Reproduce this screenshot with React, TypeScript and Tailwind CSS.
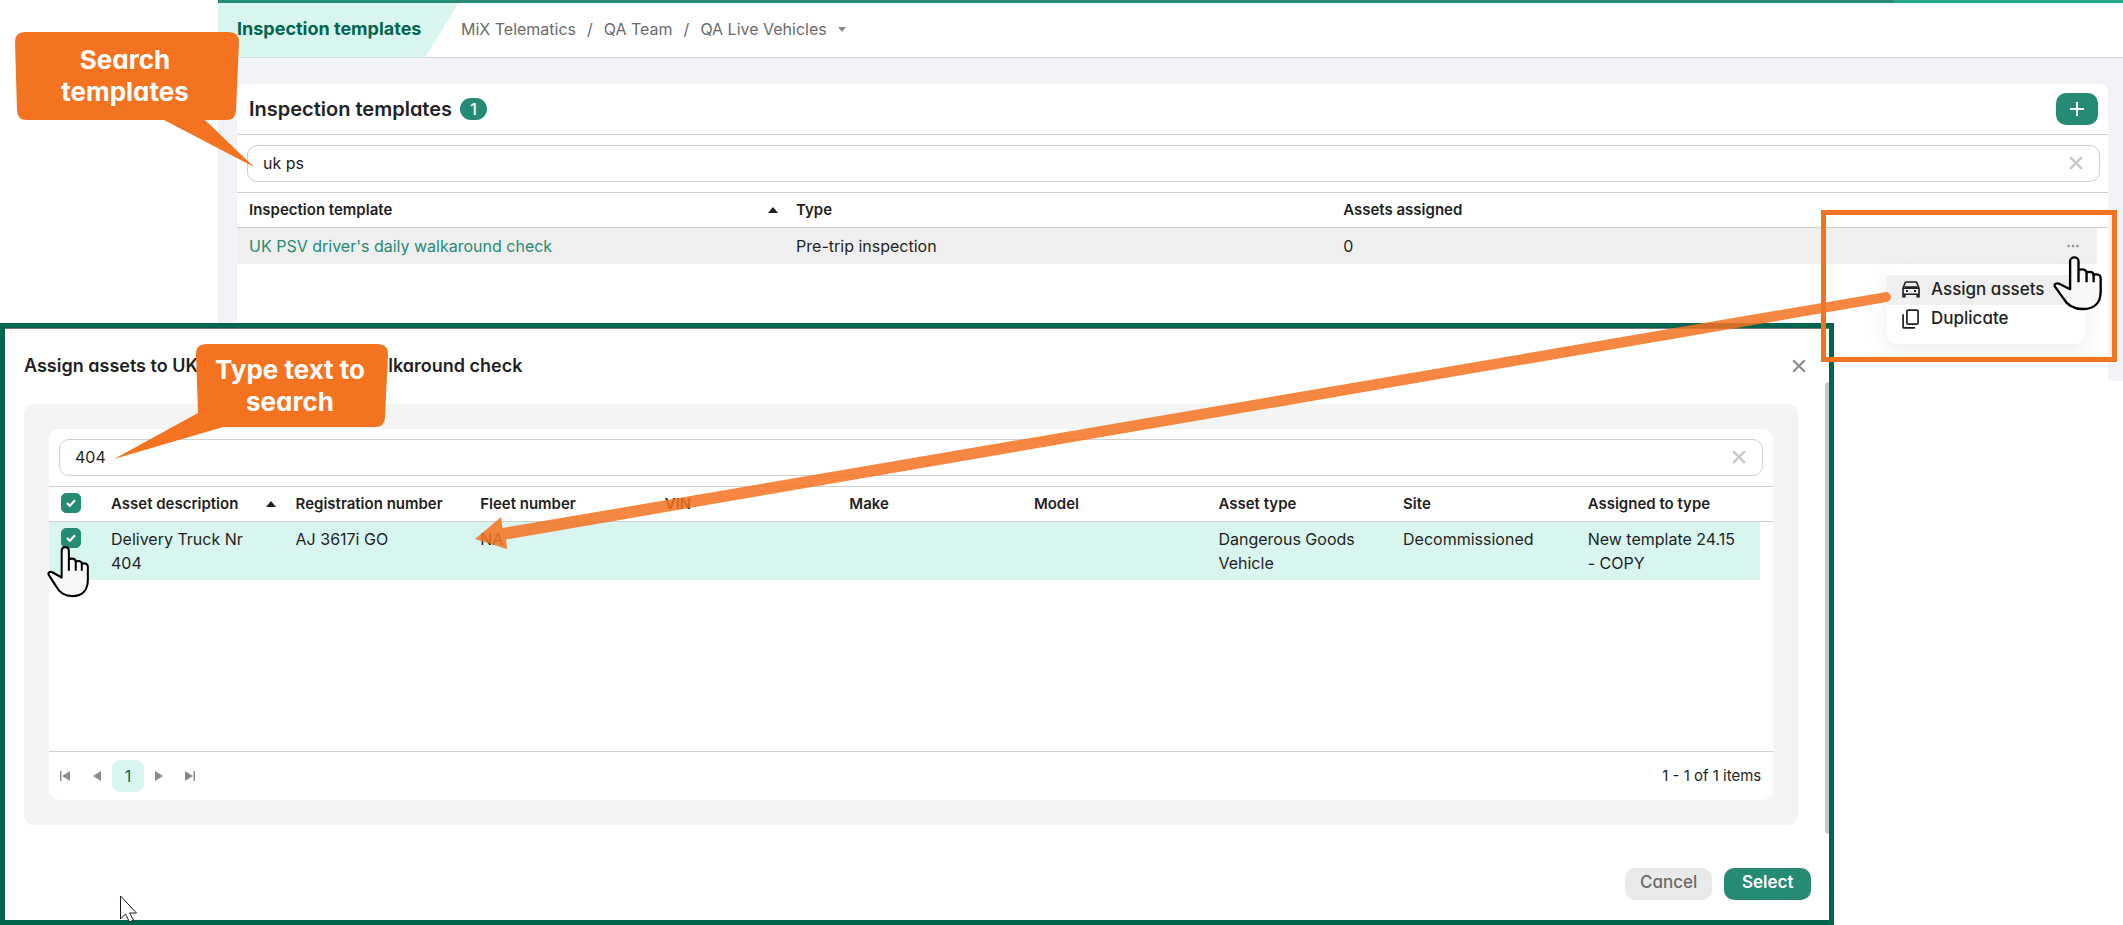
import React, { useState } from "react";

const line = "border-[#cfcfcf]";

function Close({ className }: { className: string }) {
  return (
    <svg viewBox="0 0 12 12" fill="none" stroke="currentColor" className={className} aria-hidden="true">
      <path d="M1 1l10 10M11 1L1 11" />
    </svg>
  );
}

function SortUp() {
  return (
    <svg viewBox="0 0 10 6" className="h-1.5 w-2.5 shrink-0 fill-[#1f1f1f]" aria-hidden="true">
      <path d="M0 6L5 0l5 6z" />
    </svg>
  );
}

function Hand({ className }: { className: string }) {
  return (
    <svg viewBox="490 60 146 168" preserveAspectRatio="none" className={className} aria-hidden="true">
      <path
        d="M541 163V79c0-16 25-16 25 0v26c12-4 24-1 24 8 10-5 21-1 21 6 11-3 21 1 21 9v42c0 36-22 52-54 52-28 0-45-11-57-32l-25-35c-5-9 6-12 14-8z"
        fill="#f8f8f8"
        stroke="#000"
        strokeWidth="7"
        strokeLinejoin="round"
      />
      <path d="M566 104v38M590 112v30M611 118v24" stroke="#000" strokeWidth="7" fill="none" />
    </svg>
  );
}

function SearchBox({ id, label, initial }: { id: string; label: string; initial: string }) {
  const [value, setValue] = useState(initial);
  return (
    <div className={`flex h-[37px] items-center rounded-[10px] border bg-white pr-4 pb-0.5 pl-[15px] ${line}`}>
      <label htmlFor={id} className="sr-only">
        {label}
      </label>
      <input
        id={id}
        type="text"
        value={value}
        onChange={(e) => setValue(e.target.value)}
        className="min-w-0 flex-1 bg-transparent text-base text-[#1f1f1f] outline-none"
      />
      <button type="button" aria-label="Clear search" onClick={() => setValue("")} className="text-[#c9c9c9]">
        <Close className="size-3.5 stroke-[2.2]" />
      </button>
    </div>
  );
}

function Tick({ label }: { label: string }) {
  return (
    <label className="grid size-5 place-items-center">
      <span className="sr-only">{label}</span>
      <input
        type="checkbox"
        defaultChecked
        className="peer col-start-1 row-start-1 size-5 appearance-none rounded-[5px] border border-[#268b74] checked:bg-[#268b74]"
      />
      <svg
        viewBox="0 0 10 8"
        className="pointer-events-none col-start-1 row-start-1 hidden h-2 w-2.5 fill-none stroke-white stroke-[2.2] peer-checked:block"
        aria-hidden="true"
      >
        <path d="M1 4l2.800 2.800L9 1.200" />
      </svg>
    </label>
  );
}

function TemplatesPage() {
  return (
    <div className="ml-[218px]">
      <div className="flex h-[3px] bg-[#25a98a]">
        <div className="w-[88%] bg-[#268b74]" />
      </div>
      <header className={`flex h-[55px] items-center border-b bg-white ${line}`}>
        <h1 className="flex h-[55px] w-[241px] items-center bg-[#d9f5ef] pb-0.5 pl-[19px] text-lg font-bold text-[#02664f] [clip-path:polygon(0_0,100%_0,86%_100%,0_100%)]">
          Inspection templates
        </h1>
        <nav aria-label="Breadcrumb" className="flex items-center gap-[11px] pb-0.5 pl-[2px] text-base text-[#6b6b6b]">
          <a href="#mix">MiX Telematics</a>
          <span>/</span>
          <a href="#team">QA Team</a>
          <span>/</span>
          <a href="#vehicles" className="flex items-center gap-[11px]">
            QA Live Vehicles
            <svg viewBox="0 0 8 5" className="h-[5px] w-2 fill-[#8c8c8c]" aria-hidden="true">
              <path d="M0 0h8L4 5z" />
            </svg>
          </a>
        </nav>
      </header>
      <div className="bg-[#f1f3f7] px-[19px] pt-[26px] pr-[15px]">
        <section className="min-h-[297px] rounded-t-lg bg-white">
          <div className={`flex h-[51px] items-center border-b pr-[10px] pl-3 ${line}`}>
            <h2 className="text-xl font-semibold text-[#1f2328] [font-feature-settings:'cv11']">Inspection templates</h2>
            <span className="ml-2 flex h-[22px] w-[27px] items-center justify-center rounded-full bg-[#268b74] text-base font-medium text-white">
              1
            </span>
            <button
              type="button"
              aria-label="Add template"
              className="ml-auto grid h-8 w-[42px] place-items-center rounded-[10px] bg-[#268b74]"
            >
              <svg viewBox="0 0 14 14" className="size-3.5 stroke-white stroke-2" aria-hidden="true">
                <path d="M7 0v14M0 7h14" />
              </svg>
            </button>
          </div>
          <div className="px-2 py-[10px] pl-[10px]">
            <SearchBox id="template-search" label="Search templates" initial="uk ps" />
          </div>
          <table className="w-full table-fixed border-collapse text-left text-base text-[#1f1f1f]">
            <colgroup>
              <col className="w-[29.24%]" />
              <col className="w-[29.24%]" />
              <col className="w-[29.24%]" />
              <col />
              <col className="w-[11px]" />
            </colgroup>
            <thead>
              <tr className={`h-[35px] border-y text-[15px] ${line}`}>
                <th className="pl-3 font-semibold">
                  <div className="flex items-center justify-between pr-[6px]">
                    Inspection template
                    <SortUp />
                  </div>
                </th>
                <th className="pl-3 font-semibold">Type</th>
                <th className="pl-3 font-semibold">Assets assigned</th>
                <th />
                <th />
              </tr>
            </thead>
            <tbody>
              <tr className="h-9">
                <td className="bg-[#efefef] pl-3">
                  <a href="#template" className="text-[#268b74]">
                    UK PSV driver's daily walkaround check
                  </a>
                </td>
                <td className="bg-[#efefef] pl-3">Pre-trip inspection</td>
                <td className="bg-[#efefef] pl-3">0</td>
                <td className="relative bg-[#efefef] pr-[18px]">
                  <button type="button" aria-label="More actions" className="ml-auto block">
                    <svg viewBox="0 0 12 4" className="h-1 w-3 fill-[#8c8c8c]" aria-hidden="true">
                      <circle cx="1.6" cy="2" r="1.3" />
                      <circle cx="6" cy="2" r="1.3" />
                      <circle cx="10.4" cy="2" r="1.3" />
                    </svg>
                  </button>
                  <ActionMenu />
                </td>
                <td />
              </tr>
            </tbody>
          </table>
        </section>
      </div>
    </div>
  );
}

function ActionMenu() {
  return (
    <div
      role="menu"
      className="absolute top-full right-3 w-[198px] rounded-[10px] bg-white pt-[11px] pb-[10px] text-[17px] font-medium text-[#1f1f1f] shadow-[0_8px_20px_rgba(30,40,60,0.08)] [font-feature-settings:'cv11']"
    >
      <button type="button" role="menuitem" className="flex h-[30px] w-full items-center gap-[11px] bg-[#efefef] pl-[15px]">
        <svg viewBox="0 0 18 17" className="h-[17px] w-[18px] fill-none stroke-[#1f1f1f] stroke-[1.6]" aria-hidden="true">
          <path d="M1 7.200L3.200 1.600Q3.500 1 4.200 1h9.600q.7 0 1 .6L17 7.200M1 7.200v8.400h1.800v-2.400h12.400v2.400H17V7.200zM1 13.200h16M2.800 6h12.400" />
          <path d="M4 10h2M12 10h2" strokeWidth="2" />
        </svg>
        Assign assets
      </button>
      <button type="button" role="menuitem" className="flex h-[29px] w-full items-center gap-[11px] pl-[15px]">
        <svg viewBox="0 0 18 20" className="h-5 w-[18px] fill-none stroke-[#1f1f1f] stroke-[1.7]" aria-hidden="true">
          <rect x="4.9" y="1.1" width="11.2" height="14" rx="1.4" />
          <path d="M1.100 5.200v13q0 .7.7.7H13" />
        </svg>
        Duplicate
      </button>
    </div>
  );
}

const columns = [
  "Asset description",
  "Registration number",
  "Fleet number",
  "VIN",
  "Make",
  "Model",
  "Asset type",
  "Site",
  "Assigned to type",
];
const asset = [
  "Delivery Truck Nr 404",
  "AJ 3617i GO",
  "NA",
  "",
  "",
  "",
  "Dangerous Goods Vehicle",
  "Decommissioned",
  "New template 24.15 - COPY",
];

const pagerShape = "h-[10px] w-[10px] fill-[#8c8c8c]";

function AssignDialog() {
  return (
    <div
      role="dialog"
      aria-labelledby="assign-title"
      className="absolute top-[323px] left-0 w-[86.4%] border-[5px] border-[#02664f] bg-white pr-[31px] pl-[19px]"
    >
      <div className="absolute inset-x-0 top-0 h-px bg-[#777777]" />
      <div className="absolute top-[54px] right-0 h-[452px] w-1 rounded-l bg-[#c8c8c8]" />
      <div className="-mr-2 flex h-[76px] items-center justify-between">
        <h2 id="assign-title" className="text-lg font-semibold text-[#1f1f1f] [font-feature-settings:'cv11']">
          Assign assets to UK PSV driver's daily walkaround check
        </h2>
        <button type="button" aria-label="Close" className="text-[#8c8c8c]">
          <Close className="size-3.5 stroke-[1.8]" />
        </button>
      </div>
      <div className="rounded-[10px] bg-[#f4f4f4] p-[25px]">
        <div className="rounded-[10px] bg-white">
          <div className="p-[10px]">
            <SearchBox id="asset-search" label="Search assets" initial="404" />
          </div>
          <div className={`min-h-[266px] border-b ${line}`}>
            <table className="w-full table-fixed border-collapse text-left text-base text-[#1f1f1f]">
              <colgroup>
                <col className="w-[50px]" />
                {columns.map((c) => (
                  <col key={c} />
                ))}
                <col className="w-[13px]" />
              </colgroup>
              <thead>
                <tr className={`h-[35px] border-y text-[15px] ${line}`}>
                  <th className="pb-[3px] pl-3">
                    <Tick label="Select all assets" />
                  </th>
                  {columns.map((c, i) => (
                    <th key={c} className="pl-3 font-semibold whitespace-nowrap">
                      <div className="flex items-center justify-between pr-2">
                        {c}
                        {i === 0 && <SortUp />}
                      </div>
                    </th>
                  ))}
                  <th />
                </tr>
              </thead>
              <tbody>
                <tr className="align-top">
                  <td className="bg-[#d9f5ef] pt-1.5 pl-3">
                    <Tick label="Select Delivery Truck Nr 404" />
                  </td>
                  {asset.map((v, i) => (
                    <td key={columns[i]} className="bg-[#d9f5ef] pt-[5px] pr-5 pb-[5px] pl-3">
                      {v}
                    </td>
                  ))}
                  <td />
                </tr>
              </tbody>
            </table>
          </div>
          <div className="flex h-12 items-center justify-between pr-3 pl-[11px] text-[15px] text-[#1f1f1f]">
            <nav aria-label="Pages" className="flex items-center">
              <button type="button" aria-label="First page" className="mr-[22px]">
                <svg viewBox="0 0 10 10" className={pagerShape} aria-hidden="true">
                  <path d="M0 0h1.500v10H0zM10 0v10L2 5z" />
                </svg>
              </button>
              <button type="button" aria-label="Previous page" className="mr-[10px]">
                <svg viewBox="0 0 10 10" className={pagerShape} aria-hidden="true">
                  <path d="M9 0v10L1 5z" />
                </svg>
              </button>
              <button
                type="button"
                aria-current="page"
                className="grid size-8 place-items-center rounded-lg bg-[#d9f5ef] text-base text-[#02664f]"
              >
                1
              </button>
              <button type="button" aria-label="Next page" className="ml-[10px]">
                <svg viewBox="0 0 10 10" className={pagerShape} aria-hidden="true">
                  <path d="M1 0v10l8-5z" />
                </svg>
              </button>
              <button type="button" aria-label="Last page" className="ml-[21px]">
                <svg viewBox="0 0 10 10" className={pagerShape} aria-hidden="true">
                  <path d="M8.500 0H10v10H8.500zM0 0v10l8-5z" />
                </svg>
              </button>
            </nav>
            <span>1 - 1 of 1 items</span>
          </div>
        </div>
      </div>
      <div className="-mr-[13px] flex justify-end gap-3 pt-[43px] pb-5 text-[17px] font-medium [font-feature-settings:'cv11']">
        <button type="button" className="h-8 w-[87px] rounded-[10px] bg-[#e9e9e9] pb-0.5 text-[#6b6b6b]">
          Cancel
        </button>
        <button type="button" className="h-8 w-[87px] rounded-[10px] bg-[#268b74] pb-0.5 font-semibold text-white">
          Select
        </button>
      </div>
    </div>
  );
}

const callout =
  "pointer-events-none absolute text-center text-[26px] leading-8 font-bold text-white [font-feature-settings:'cv11']";

function Annotations() {
  return (
    <>
      <svg
        viewBox="0 0 1430 260"
        className="pointer-events-none absolute top-[290px] left-[470px] h-[260px] w-[1430px]"
        aria-hidden="true"
      >
        <path
          d="M1415 2.200a5 5 0 0 1 1.700 9.900L36 249.500l1.200 9.500L5 249l26-22 1.600 11z"
          fill="#f37321"
          opacity="0.86"
        />
      </svg>
      <div className="pointer-events-none absolute top-[210px] left-[1821px] h-[152px] w-[296px] border-[5px] border-[#f37321]" />

      <svg viewBox="0 0 240 136" className="pointer-events-none absolute top-8 left-[15px] h-[136px] w-[240px]" aria-hidden="true">
        <path
          d="M10 0H214q10 0 10 10L221 78q0 10-10 10H190L239 135 149 88H12q-10 0-10-10L0 10Q0 0 10 0z"
          fill="#f37321"
        />
      </svg>
      <p className={`${callout} top-11 left-[15px] w-[220px]`}>
        Search
        <br />
        templates
      </p>

      <svg viewBox="0 0 276 116" className="pointer-events-none absolute top-[344px] left-[113px] h-[116px] w-[276px]" aria-hidden="true">
        <path
          d="M93 0H265q10 0 10 10L272 73q0 10-10 10H110L1 115 85 69 83 10Q83 0 93 0z"
          fill="#f37321"
        />
      </svg>
      <p className={`${callout} top-[354px] left-[196px] w-[188px]`}>
        Type text to
        <br />
        search
      </p>

      <Hand className="pointer-events-none absolute top-[255px] left-[2053px] h-14 w-[49px]" />
      <Hand className="pointer-events-none absolute top-[545px] left-[47px] h-[53px] w-[42px]" />
      <svg viewBox="0 0 19 28" className="pointer-events-none absolute top-[895px] left-[119px] h-7 w-[19px]" aria-hidden="true">
        <path d="M1.500 1v23l5-5 4 8 4-2-4-7h7z" fill="#fff" stroke="#1b1b28" />
      </svg>
    </>
  );
}

export default function App() {
  return (
    <div className="relative min-h-screen overflow-hidden bg-white font-[Inter,'Liberation_Sans',sans-serif]">
      <TemplatesPage />
      <AssignDialog />
      <Annotations />
    </div>
  );
}
